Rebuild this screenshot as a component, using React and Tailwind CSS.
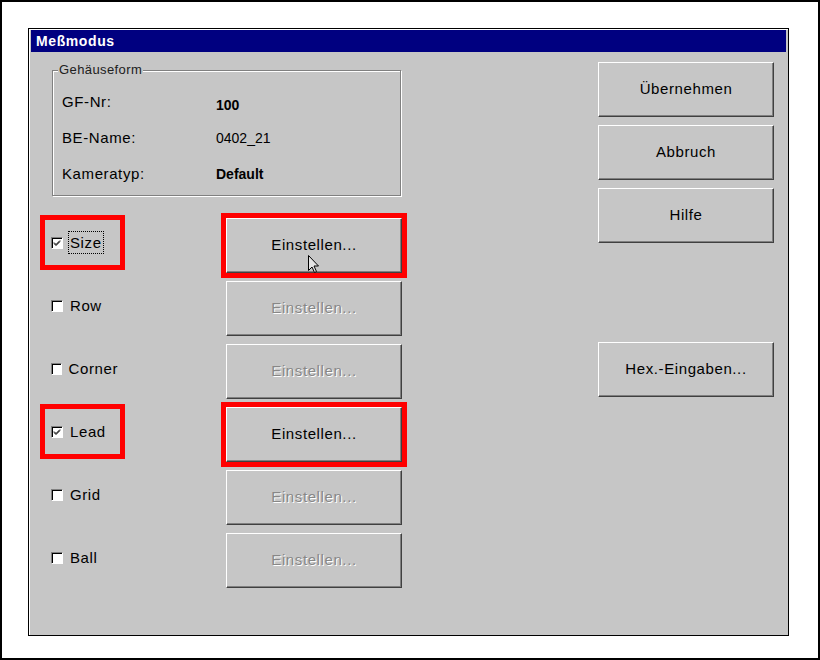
const font = { fontFamily: '"Liberation Sans", Arial, sans-serif' };

function Cursor() {
  return (
    <svg className="absolute left-[81px] top-[36px]" width="12" height="19" viewBox="0 0 12 19">
      <path d="M0.5 0.5 L0.5 15.5 L4 12 L6.5 17.5 L8.5 16.5 L6 11 L10.5 11 Z" fill="#e4e4e4" stroke="#000" strokeWidth="1" />
    </svg>
  );
}

function WinButton({ children, disabled, marked, cursor, className = "" }) {
  return (
    <div
      className={
        "relative flex h-[55px] w-[176px] items-center justify-center border border-t-white border-l-white border-b-[#404040] border-r-[#404040] bg-[#c6c6c6] text-[15px] tracking-[0.6px] shadow-[inset_-1px_-1px_0_#808080] " +
        (marked ? "outline-[5px] outline-[#ff0000] outline " : "") +
        (disabled ? "text-[#878787] [text-shadow:1px_1px_0_#ffffff] " : "text-black ") +
        className
      }
    >
      {children}
      {cursor && <Cursor />}
    </div>
  );
}

function CheckBox({ checked }) {
  return (
    <div className="flex h-[12px] w-[12px] items-center justify-center border border-t-[#808080] border-l-[#808080] border-b-white border-r-white bg-white shadow-[inset_1px_1px_0_#000]">
      {checked && (
        <svg width="8" height="8" viewBox="0 0 8 8">
          <path d="M1 3.5 L3 5.5 L7 1.5 M1 4.5 L3 6.5 L7 2.5" fill="none" stroke="#000" strokeWidth="1" />
        </svg>
      )}
    </div>
  );
}

const rows = [
  { name: "Size", checked: true, focus: true },
  { name: "Row" },
  { name: "Corner" },
  { name: "Lead", checked: true },
  { name: "Grid" },
  { name: "Ball" },
];

const info = [
  { label: "GF-Nr:", value: "100", cls: "mt-[6px] font-bold" },
  { label: "BE-Name:", value: "0402_21", cls: "" },
  { label: "Kameratyp:", value: "Default", cls: "font-bold" },
];

export default function App() {
  return (
    <div className="h-[660px] w-[820px] border-2 border-black bg-white pl-[26px] pt-[26px]" style={font}>
      <div className="flex h-[608px] w-[761px] flex-col border border-black bg-[#c6c6c6] px-[1px] pt-[1px] shadow-[inset_1px_1px_0_#ffffff]">
        <div className="mx-[1px] flex h-[22px] items-center bg-[#000080] pl-[5px] text-[14px] font-bold tracking-[0.6px] text-white">
          Meßmodus
        </div>

        <div className="flex flex-1 items-start">
          {/* left column */}
          <div className="flex w-[560px] flex-col pl-[15px] pt-[18px]">
            <div className="relative ml-[7px] h-[126px] w-[349px] border border-[#808080] pl-[9px] pt-[13px] shadow-[inset_1px_1px_0_#ffffff,1px_1px_0_#ffffff]">
              <span className="absolute -top-[9px] left-[5px] bg-[#c6c6c6] px-[1px] text-[13px] leading-[16px] tracking-[0.4px] text-[#202020]">
                Gehäuseform
              </span>
              {info.map((r) => (
                <div key={r.label} className="flex h-[36px] items-center">
                  <span className="w-[154px] text-[15px] tracking-[0.6px] text-black">{r.label}</span>
                  <span className={"text-[14px] text-black " + r.cls}>{r.value}</span>
                </div>
              ))}
            </div>

            <div className="mt-[22px] flex flex-col gap-[8px]">
              {rows.map((r, i) => (
                <div key={r.name} className="flex h-[55px] items-start">
                  <div
                    className={
                      "mt-[2px] flex h-[45px] w-[75px] items-center pl-[6px] " +
                      (r.checked ? "outline outline-[5px] outline-[#ff0000]" : "")
                    }
                  >
                    <CheckBox checked={r.checked} />
                    <span
                      className={
                        "ml-[5px] border px-[1px] text-[15px] leading-[21px] tracking-[0.6px] text-black " +
                        (r.focus ? "border-dotted border-black" : "border-transparent")
                      }
                    >
                      {r.name}
                    </span>
                  </div>
                  <div className="ml-[106px]">
                    <WinButton disabled={!r.checked} marked={r.checked} cursor={i === 0}>
                      Einstellen...
                    </WinButton>
                  </div>
                </div>
              ))}
            </div>
          </div>

          {/* right column */}
          <div className="ml-[8px] flex flex-col gap-[8px] pt-[10px]">
            <WinButton>Übernehmen</WinButton>
            <WinButton>Abbruch</WinButton>
            <WinButton>Hilfe</WinButton>
            <WinButton className="mt-[91px]">Hex.-Eingaben...</WinButton>
          </div>
        </div>
      </div>
    </div>
  );
}
